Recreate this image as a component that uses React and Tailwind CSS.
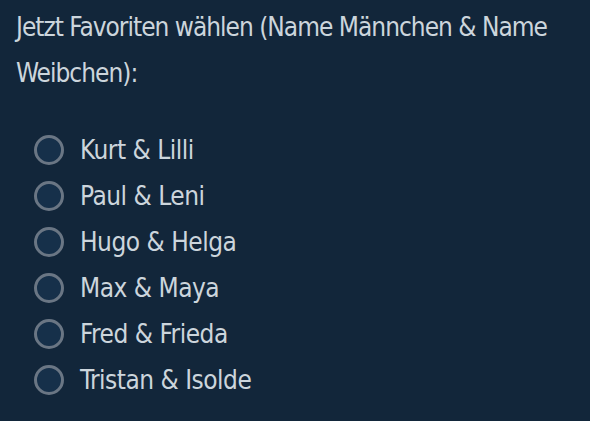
export default function App() {
  const pairs = [
    "Kurt & Lilli",
    "Paul & Leni",
    "Hugo & Helga",
    "Max & Maya",
    "Fred & Frieda",
    "Tristan & Isolde",
  ];

  return (
    <div className="min-h-[421px] w-[590px] bg-[#12263a] pt-[4px] pl-[16px] text-[#ccd5dc] font-['DejaVu_Sans_Condensed','DejaVu_Sans',sans-serif] [font-stretch:condensed]">
      <p className="text-[26px] leading-[46px] tracking-[-1px]">
        Jetzt Favoriten wählen (Name Männchen &amp; Name Weibchen):
      </p>
      <div className="mt-[31px] pl-[18px] flex flex-col">
        {pairs.map((p) => (
          <label key={p} className="flex items-center gap-[16px] h-[46px]">
            <span className="w-[30px] h-[30px] rounded-full border-[3px] border-[#6a7684] bg-[#16304a]" />
            <span className="text-[26px] tracking-[-0.5px]">{p}</span>
          </label>
        ))}
      </div>
    </div>
  );
}
